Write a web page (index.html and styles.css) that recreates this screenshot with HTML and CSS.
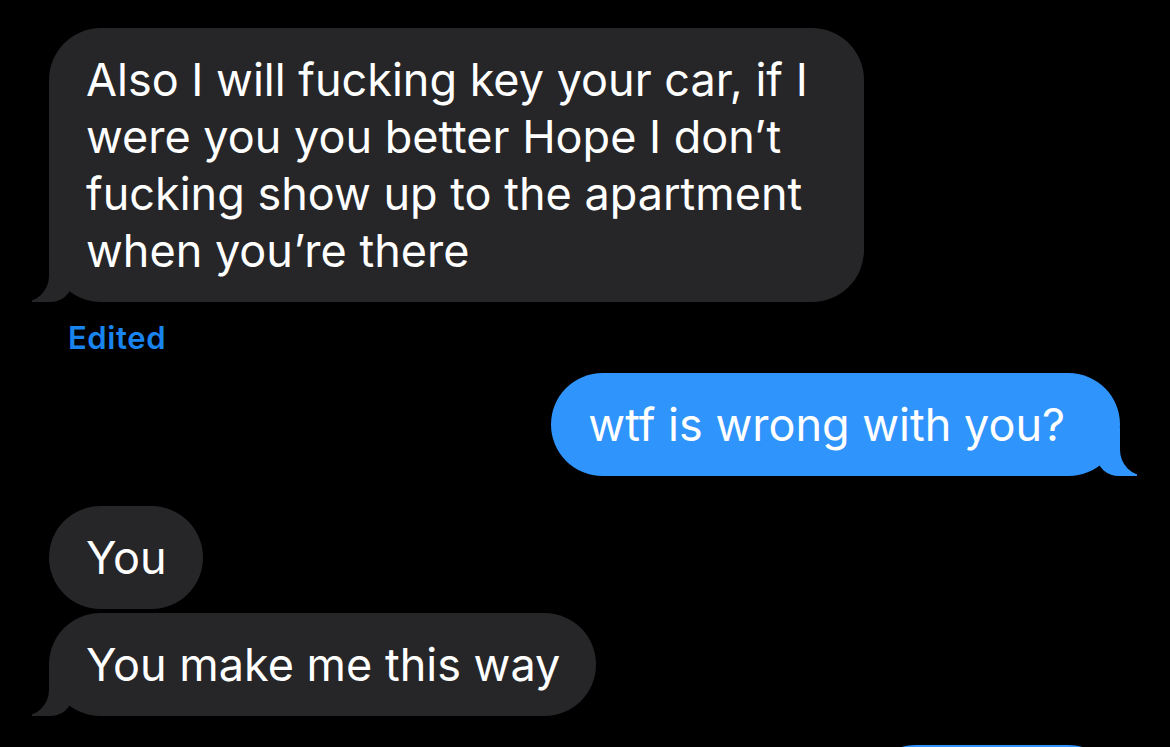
FILE: index.html
```html
<!doctype html>
<html lang="en">
<head>
    <meta charset="UTF-8">
    <meta name="viewport" content="width=device-width, initial-scale=1.0">
    <title>Messages</title>
    <link rel="stylesheet" href="styles.css">
</head>
<body>
    <!-- Conversation -->
    <div class="thread">
        <div class="msg received tail wide">
            Also I will fucking key your car, if I<br>
            were you you better Hope I don’t<br>
            fucking show up to the apartment<br>
            when you’re there
        </div>
        <div class="edited">Edited</div>

        <div class="msg sent tail">wtf is wrong with you?</div>

        <div class="msg received first">You</div>
        <div class="msg received tail">You make me this way</div>

        <div class="msg sent next">&nbsp;</div>
    </div>
</body>
</html>
```

FILE: styles.css
```css
/* General Styles */
html, body {
    height: 747px;
    overflow: hidden;
}

body {
    margin: 0;
    background-color: #000;
    font-family: 'Inter', 'Roboto', sans-serif;
    color: #fff;
}

/* Thread */
.thread {
    display: flex;
    flex-direction: column;
    padding: 28px 50px 0 49px;
}

/* Bubbles */
.msg {
    position: relative;
    font-size: 45px;
    line-height: 57px;
    padding: 23px 36px 23px 37px;
    border-radius: 52px;
    width: fit-content;
}

.msg.wide {
    padding-right: 56px;
}

.received {
    align-self: flex-start;
    background-color: #262628;
}

.sent {
    align-self: flex-end;
    background-color: #3094fd;
    padding-left: 37px;
    padding-right: 55px;
    margin-top: 17px;
}

.first {
    margin-top: 30px;
    margin-bottom: 4px;
}

.next {
    width: 256px;
    padding: 23px 0;
    margin-top: 29px;
}

/* Tails */
.msg.tail::before,
.msg.tail::after {
    content: '';
    position: absolute;
    bottom: 0;
    height: 48px;
}

.received.tail::before {
    left: -17px;
    width: 40px;
    background-color: #262628;
    border-bottom-right-radius: 22px 20px;
}

.received.tail::after {
    left: -70px;
    width: 70px;
    background-color: #000;
    border-bottom-right-radius: 26px;
}

.sent.tail::before {
    right: -17px;
    width: 40px;
    background-color: #3094fd;
    border-bottom-left-radius: 22px 20px;
}

.sent.tail::after {
    right: -70px;
    width: 70px;
    background-color: #000;
    border-bottom-left-radius: 26px;
}

/* Edited label */
.edited {
    align-self: flex-start;
    margin: 18px 0 0 19px;
    font-size: 31px;
    font-weight: 600;
    letter-spacing: 0.6px;
    line-height: 36px;
    color: #1a84ee;
}
```
